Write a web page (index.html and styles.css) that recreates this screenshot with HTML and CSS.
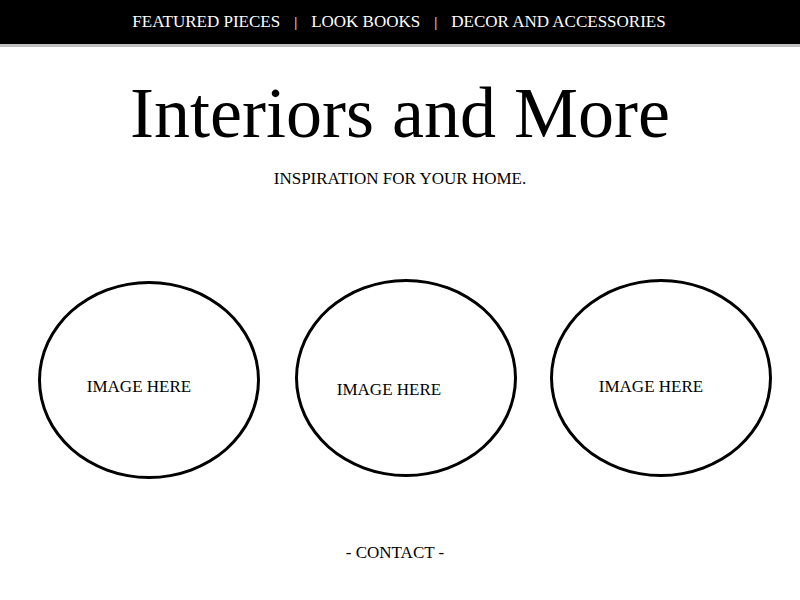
FILE: index.html
```html
<!DOCTYPE html>
<html>
<head>
<meta charset="utf-8">
<link rel="stylesheet" href="styles.css">
</head>
<body>
<nav class="nav">
  <a class="nav-link">FEATURED PIECES</a>
  <span class="sep">|</span>
  <a class="nav-link">LOOK BOOKS</a>
  <span class="sep">|</span>
  <a class="nav-link">DECOR AND ACCESSORIES</a>
</nav>
<header class="header">
  <h1 class="title">Interiors and More</h1>
  <p class="tagline">INSPIRATION FOR YOUR HOME.</p>
</header>
<section class="gallery">
  <div class="circle circle-a"><span class="label">IMAGE HERE</span></div>
  <div class="circle circle-b"><span class="label">IMAGE HERE</span></div>
  <div class="circle circle-c"><span class="label">IMAGE HERE</span></div>
</section>
<footer class="footer">- CONTACT -</footer>
</body>
</html>
```

FILE: styles.css
```css
html, body {
  margin: 0;
  padding: 0;
  background: #fff;
  color: #000;
}
body {
  font-family: "Liberation Serif", serif;
}
.nav {
  height: 44px;
  background: #000;
  border-bottom: 3px solid #c0c0c0;
  display: flex;
  justify-content: center;
  align-items: center;
  gap: 14px;
  color: #fff;
  font-size: 17px;
  padding-right: 2px;
}
.nav-link {
  color: #fff;
}
.sep {
  color: #fff;
  font-size: 15px;
}
.header {
  text-align: center;
}
.title {
  margin: 30px 0 0;
  font-weight: normal;
  font-size: 72px;
  line-height: 72px;
}
.tagline {
  margin: 20px 0 0;
  font-size: 17px;
  line-height: 20px;
}
.gallery {
  display: flex;
  justify-content: space-between;
  padding: 0 28px 0 38px;
  margin-top: 92px;
}
.circle {
  width: 216px;
  height: 192px;
  border: 3px solid #000;
  border-radius: 50%;
  display: flex;
  align-items: center;
  justify-content: center;
  font-size: 17px;
}
.circle-a { padding: 14px 20px 0 0; height: 178px; width: 196px; }
.circle-b { padding: 24px 34px 0 0; height: 168px; width: 182px; margin-top: -2px; margin-left: 2px; }
.circle-c { padding: 18px 20px 0 0; height: 174px; width: 196px; margin-top: -2px; }
.footer {
  text-align: center;
  margin-top: 64px;
  font-size: 17px;
  padding-right: 10px;
}
```
